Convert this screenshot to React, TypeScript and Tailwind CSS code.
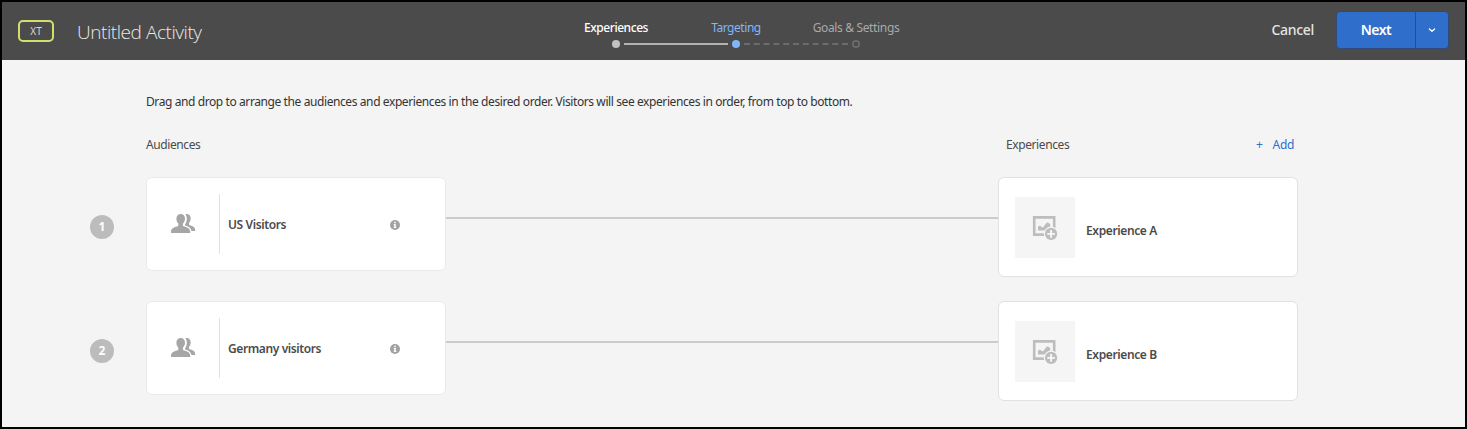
import React from 'react';

const rows = [
  { n: 1, audience: 'US Visitors', experience: 'Experience A' },
  { n: 2, audience: 'Germany visitors', experience: 'Experience B' },
];

function PeopleIcon() {
  return (
    <svg width="26" height="22" viewBox="0 0 26 22" fill="#a6a6a6" className="block">
      <path d="M10.700 1C8.200 1 6.400 2.700 6.400 5.700c0 2 .8 3.800 1.900 4.900v1.600c0 .7-.4 1.100-1.200 1.200C3.600 14 1 15.800 1 18.800V20h19.200v-1.200c0-3-2.600-4.800-6.100-5.400-.8-.1-1.200-.5-1.200-1.200v-1.600C14.100 9.500 15 7.700 15 5.700 15 2.700 13.200 1 10.700 1z" />
      <path d="M15.300 1.200c.4-.1.9-.2 1.400-.2 2.500 0 4 1.700 4 4.500 0 1.800-.7 3.400-1.700 4.500v1.200c0 .6.300.9.900 1.100 3.200.7 5.300 2.200 5.300 4.900v.9h-3.700c-.7-2.800-2.700-4.600-6.400-5.500v-1.400c.9-1.200 1.700-3 1.700-5.200 0-2-.4-3.700-1.500-4.800z" />
    </svg>
  );
}

function InfoIcon() {
  return (
    <svg width="10" height="10" viewBox="0 0 10 10" className="block">
      <circle cx="5" cy="5" r="5" fill="#a2a2a2" />
      <path d="M4.200 1.800h1.600v1.400H4.200zM3.700 4h2.100v3.200h.6v.9H3.600v-.9h.6V4.900h-.5z" fill="#fff" />
    </svg>
  );
}

function ImageAddIcon() {
  return (
    <svg width="28" height="27" viewBox="0 0 28 27" className="block">
      <path d="M3.200 3.400h20v17.200h-20z" fill="none" stroke="#bdbdbd" strokeWidth="2.600" />
      <path d="M7 16.500v-2.800c0-1.200.8-1.900 1.800-1.900 1.200 0 1.700 1.200 2.900 1.700 1.500-.8 2.700-4.200 4.600-4.900 1.300-.3 2.200.9 2.900 2v5.900z" fill="#bdbdbd" />
      <circle cx="20.100" cy="19.900" r="7.300" fill="#f5f5f5" />
      <circle cx="20.100" cy="19.900" r="6.100" fill="#bdbdbd" />
      <path d="M20.100 16.100v7.600M16.300 19.900h7.600" stroke="#f7f7f7" strokeWidth="1.900" />
    </svg>
  );
}

function Header() {
  return (
    <header className="flex h-[58px] shrink-0 bg-[#4b4b4b]">
      <div className="flex w-[554px] items-start pl-4">
        <div className="mt-[18px] flex h-[22px] w-9 items-center justify-center rounded-[5px] border-2 border-[#d3df6b] pb-px text-[10px] leading-none text-[#d6d6d6]">
          XT
        </div>
        <h1 className="mt-4 ml-[23px] font-['Open_Sans'] text-[19px] leading-7 font-[350] tracking-[-0.44px] whitespace-nowrap text-[#e8e8e8]">Untitled Activity</h1>
      </div>
      <div className="flex w-[360px] shrink-0 flex-col">
        <div className="mt-4 grid h-5 grid-cols-3 text-center text-[12px] leading-5 tracking-[-0.35px] whitespace-nowrap">
          <span className="font-medium tracking-[-0.45px] text-white">Experiences</span>
          <span className="tracking-[-0.45px] text-[#80b7f8]">Targeting</span>
          <span className="text-[#a9a9a9]">Goals &amp; Settings</span>
        </div>
        <svg width="252" height="10" viewBox="0 0 252 10" className="mt-px ml-[54px] block">
          <circle cx="6" cy="5" r="4" fill="#c2c2c2" />
          <path d="M14 5h104" stroke="#b3b3b3" strokeWidth="2" />
          <circle cx="126" cy="5" r="4" fill="#80b7f8" />
          <path d="M134 5h104" stroke="#6c6c6c" strokeWidth="2" strokeDasharray="6 3.8" />
          <circle cx="246" cy="5" r="3.200" fill="none" stroke="#6c6c6c" strokeWidth="1.700" />
        </svg>
      </div>
      <div className="flex flex-1 items-start justify-end pr-4">
        <button className="mt-[18px] mr-[22px] text-[14px] leading-5 font-medium tracking-[-0.3px] text-[#e4e4e4]">Cancel</button>
        <div className="mt-[9px] flex h-[38px] w-[113px] overflow-hidden rounded-[4px] border border-[#304b78] bg-[#2f6fcb] text-white">
          <button className="w-[79px] border-r border-[#29508e] pb-0.5 text-[14px] font-semibold tracking-[-0.5px]">Next</button>
          <button className="flex flex-1 items-center justify-center" aria-label="More options">
            <svg width="8" height="6" viewBox="0 0 8 6" fill="none" stroke="#fff" strokeWidth="1.300" strokeLinecap="round" strokeLinejoin="round">
              <path d="M1.400 1.900 4 4.200 6.600 1.900" />
            </svg>
          </button>
        </div>
      </div>
    </header>
  );
}

export default function App() {
  return (
    <div className="flex h-[429px] w-[1467px] flex-col overflow-hidden border-2 border-black bg-[#f4f4f4] font-['Noto_Sans',sans-serif] text-[#4b4b4b]">
      <Header />
      <main className="flex flex-col pl-[88px]">
        <p className="mt-8 pl-[56px] text-[12px] leading-5 tracking-[-0.405px] whitespace-nowrap text-[#333]">Drag and drop to arrange the audiences and experiences in the desired order. Visitors will see experiences in order, from top to bottom.</p>
        <div className="mt-[23px] flex h-5 pl-[56px] text-[12px] leading-5 tracking-[-0.4px]">
          <h2 className="w-[860px]">Audiences</h2>
          <h2 className="w-[250px]">Experiences</h2>
          <button className="flex gap-[10px] tracking-[-0.3px] text-[#2f6fcb]"><span>+</span><span>Add</span></button>
        </div>
        <div className="mt-[22px] flex flex-col gap-6">
          {rows.map((r) => (
            <div key={r.n} className="flex h-[100px] items-start">
              <div className="mt-[38px] mr-8 flex size-6 items-center justify-center rounded-full bg-[#bcbcbc] text-[12px] font-bold text-white">{r.n}</div>
              <section className="flex h-[94px] w-[300px] items-center rounded-[6px] border border-[#e9e9e9] bg-white">
                <div className="flex h-[60px] w-[73px] items-center border-r border-[#e1e1e1] pl-[23px]"><PeopleIcon /></div>
                <span className="flex-1 pt-0.5 pl-2 text-[12px] font-semibold tracking-[-0.4px]">{r.audience}</span>
                <span className="mr-[45px] pt-0.5"><InfoIcon /></span>
              </section>
              <div className="mt-10 h-0.5 w-[552px] bg-[#cbcbcb]" />
              <section className="flex h-[100px] w-[300px] items-center rounded-[6px] border border-[#e1e1e1] bg-white pl-4">
                <div className="flex h-[61px] w-[60px] items-center justify-center bg-[#f5f5f5]"><ImageAddIcon /></div>
                <span className="mt-[7px] pl-[11px] text-[12px] font-semibold tracking-[-0.38px]">{r.experience}</span>
              </section>
            </div>
          ))}
        </div>
      </main>
    </div>
  );
}
